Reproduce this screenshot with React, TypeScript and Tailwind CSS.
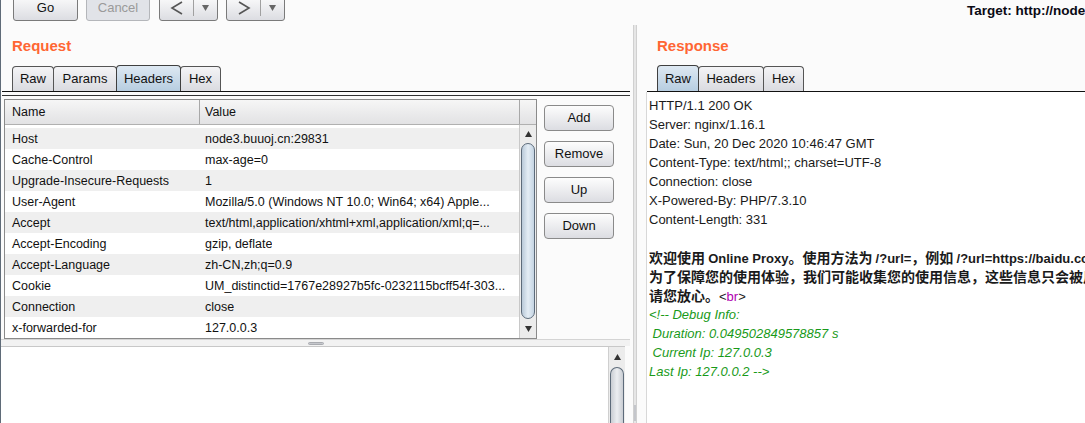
import React from "react";

const btn =
  "rounded-[3px] border border-[#7a7a7a] bg-gradient-to-b from-[#fdfdfd] to-[#dcdde2] flex items-center justify-center text-[13px] text-[#111]";

function VScroll({ thumbTop, thumbBottom }: { thumbTop: number; thumbBottom: number }) {
  return (
    <div className="w-[17px] h-full bg-[#ececec] border-l border-[#c8c8c8] flex flex-col relative">
      <div className="h-[18px] flex items-center justify-center">
        <svg width="7" height="6" viewBox="0 0 7 6"><path d="M3.5 0 L7 6 L0 6 Z" fill="#333" /></svg>
      </div>
      <div
        className="absolute left-[1px] right-[1px] rounded-[8px] border border-[#5d6b7a] bg-gradient-to-r from-[#b9c9d8] via-[#e4edf5] to-[#c5d4e2]"
        style={{ top: thumbTop, bottom: thumbBottom }}
      />
      <div className="mt-auto h-[18px] flex items-center justify-center">
        <svg width="7" height="6" viewBox="0 0 7 6"><path d="M0 0 L7 0 L3.5 6 Z" fill="#333" /></svg>
      </div>
    </div>
  );
}

function Tabs({ items, selected }: { items: { label: string; w: number }[]; selected: number }) {
  return (
    <div className="flex items-end h-[26px]">
      {items.map((t, i) => (
        <div
          key={t.label}
          style={{ width: t.w }}
          className={
            i === selected
              ? "h-[26px] -mr-px border border-b-0 border-[#3f3f3f] rounded-t-[4px] bg-gradient-to-b from-[#dde8f2] to-[#b7cde0] flex items-center justify-center text-[13px] text-[#111] relative z-10"
              : "h-[25px] -mr-px border border-b-0 border-[#555] rounded-t-[4px] bg-gradient-to-b from-[#f4f4f6] to-[#dadbe0] flex items-center justify-center text-[13px] text-[#111]"
          }
        >
          {t.label}
        </div>
      ))}
    </div>
  );
}

const rows: [string, string][] = [
  ["Host", "node3.buuoj.cn:29831"],
  ["Cache-Control", "max-age=0"],
  ["Upgrade-Insecure-Requests", "1"],
  ["User-Agent", "Mozilla/5.0 (Windows NT 10.0; Win64; x64) Apple..."],
  ["Accept", "text/html,application/xhtml+xml,application/xml;q=..."],
  ["Accept-Encoding", "gzip, deflate"],
  ["Accept-Language", "zh-CN,zh;q=0.9"],
  ["Cookie", "UM_distinctid=1767e28927b5fc-0232115bcff54f-303..."],
  ["Connection", "close"],
  ["x-forwarded-for", "127.0.0.3"],
];

const headerLines = [
  "HTTP/1.1 200 OK",
  "Server: nginx/1.16.1",
  "Date: Sun, 20 Dec 2020 10:46:47 GMT",
  "Content-Type: text/html;; charset=UTF-8",
  "Connection: close",
  "X-Powered-By: PHP/7.3.10",
  "Content-Length: 331",
];

const cjk = "font-['Noto_Sans_CJK_SC',sans-serif] text-[14px] leading-[19px] font-semibold";
const line = "h-[19px] leading-[19px] overflow-hidden";

export default function App() {
  return (
    <div className="w-[1085px] h-[423px] overflow-hidden bg-[#fbfbfb] flex flex-col font-['Liberation_Sans',Arial,sans-serif] text-[#111] border-l border-[#5f6b78]">
      {/* top bar */}
      <div className="h-[25px] flex items-start shrink-0">
        <div className="flex mt-[-6px] ml-[12px]">
          <div className={btn + " w-[65px] h-[27px]"}>Go</div>
          <div className="ml-[8px] w-[64px] h-[27px] rounded-[3px] border border-[#b4b6ba] bg-[#e1e3e8] flex items-center justify-center text-[13px] text-[#9a9a9a]">
            Cancel
          </div>
          <div className={btn + " h-[27px] ml-[9px] w-[59px] justify-start"}>
            <span className="w-[33px] flex justify-center">
              <svg width="14" height="14" viewBox="0 0 14 14"><path d="M12 1 L2 7 L12 13" stroke="#555" strokeWidth="1.6" fill="none" /></svg>
            </span>
            <span className="w-px h-[17px] bg-[#a0a0a0]" />
            <span className="flex-1 flex justify-center">
              <svg width="7" height="6" viewBox="0 0 7 6"><path d="M0 0 L7 0 L3.5 6 Z" fill="#666" /></svg>
            </span>
          </div>
          <div className={btn + " h-[27px] ml-[8px] w-[59px] justify-start"}>
            <span className="w-[33px] flex justify-center">
              <svg width="14" height="14" viewBox="0 0 14 14"><path d="M2 1 L12 7 L2 13" stroke="#555" strokeWidth="1.6" fill="none" /></svg>
            </span>
            <span className="w-px h-[17px] bg-[#a0a0a0]" />
            <span className="flex-1 flex justify-center">
              <svg width="7" height="6" viewBox="0 0 7 6"><path d="M0 0 L7 0 L3.5 6 Z" fill="#666" /></svg>
            </span>
          </div>
        </div>
        <div className="ml-[682px] mt-[1px] font-bold text-[13.5px] text-[#0a0a14] whitespace-nowrap">
          Target: http://node3.buuoj.cn:29831
        </div>
      </div>

      {/* main */}
      <div className="flex flex-1 min-h-0">
        {/* left pane */}
        <div className="w-[629px] flex flex-col shrink-0">
          <div className="h-[40px] pl-[11px] pt-[12px] text-[15px] leading-[18px] font-bold text-[#ff6633]">Request</div>
          <div className="pl-[11px]">
            <Tabs
              selected={2}
              items={[
                { label: "Raw", w: 42 },
                { label: "Params", w: 64 },
                { label: "Headers", w: 65 },
                { label: "Hex", w: 41 },
              ]}
            />
          </div>
          <div className="h-px bg-[#111] ml-px" />
          <div className="h-[3px]" />
          <div className="h-px bg-[#333] ml-px" />
          {/* table + buttons */}
          <div className="flex h-[243px] pt-[3px] pl-[3px]">
            <div className="w-[533px] h-[240px] border border-[#8a8a8a] bg-white flex flex-col">
              <div className="h-[25px] shrink-0 flex bg-gradient-to-b from-[#f6f6f6] to-[#e2e2e4] border-b border-[#b0b0b0] text-[12.5px]">
                <div className="w-[195px] border-r border-[#a8a8a8] pl-[7px] flex items-center">Name</div>
                <div className="w-[320px] border-r border-[#a8a8a8] pl-[5px] flex items-center">Value</div>
                <div className="flex-1" />
              </div>
              <div className="flex flex-1 min-h-0 bg-white">
                <div className="flex-1 flex flex-col pt-[3px]">
                  {rows.map(([n, v], i) => (
                    <div
                      key={n}
                      className={
                        "h-[21px] shrink-0 flex items-center pt-[2px] text-[12.5px] text-[#111] " +
                        (i % 2 === 0 ? "bg-[#efefef]" : "bg-white")
                      }
                    >
                      <div className="w-[195px] pl-[7px] whitespace-nowrap overflow-hidden">{n}</div>
                      <div className="pl-[5px] whitespace-nowrap overflow-hidden">{v}</div>
                    </div>
                  ))}
                </div>
                <VScroll thumbTop={18} thumbBottom={19} />
              </div>
            </div>
            <div className="ml-[7px] mt-[6px] flex flex-col gap-[10px]">
              {["Add", "Remove", "Up", "Down"].map((b) => (
                <div key={b} className="w-[70px] h-[26px] shrink-0 rounded-[4px] border border-[#8a8a8a] bg-gradient-to-b from-[#fdfdfd] to-[#dcdde2] flex items-center justify-center text-[13px] text-[#111]">
                  {b}
                </div>
              ))}
            </div>
          </div>
          {/* splitter */}
          <div className="h-[7px] flex items-center justify-center bg-[#f2f2f2] border-t border-[#d4d4d4]">
            <div className="w-[16px] h-[3px] rounded-[2px] bg-[#c5c7cc] border border-[#a9abb0]" />
          </div>
          {/* bottom text area */}
          <div className="flex-1 flex w-[624px] bg-white border-t border-[#c8c8c8]">
            <div className="flex-1" />
            <div className="w-[17px] bg-[#ececec] border-l border-[#cfcfcf] flex flex-col">
              <div className="h-[20px] flex items-center justify-center">
                <svg width="7" height="6" viewBox="0 0 7 6"><path d="M3.5 0 L7 6 L0 6 Z" fill="#333" /></svg>
              </div>
              <div className="flex-1 mx-px rounded-t-[8px] border border-b-0 border-[#5d6b7a] bg-gradient-to-r from-[#c9cdd3] via-[#eceef1] to-[#c9cdd3]" />
            </div>
          </div>
        </div>

        {/* vertical divider */}
        <div className="w-[11px] flex shrink-0">
          <div className="w-[3px]" />
          <div className="w-[4px] bg-[#e6e6e6] border-x border-[#d0d0d0] flex flex-col justify-end">
            <div className="h-[16px] mb-[2px] bg-[#c4c6cb]" />
          </div>
        </div>

        {/* right pane */}
        <div className="flex-1 flex flex-col min-w-0">
          <div className="h-[40px] pl-[16px] pt-[12px] text-[15px] leading-[18px] font-bold text-[#ff6633]">Response</div>
          <div className="pl-[16px]">
            <Tabs
              selected={0}
              items={[
                { label: "Raw", w: 42 },
                { label: "Headers", w: 66 },
                { label: "Hex", w: 41 },
              ]}
            />
          </div>
          <div className="h-px bg-[#111] ml-[6px]" />
          <div className="flex-1 ml-[5px] bg-white border-l border-[#d8d8d8] pt-[4px] pl-[2px] text-[13px] text-[#1a1a1a] whitespace-nowrap overflow-hidden">
            {headerLines.map((l) => (
              <div key={l} className={line}>{l}</div>
            ))}
            <div className="h-[19px]" />
            <div className={line}>
              <span className={cjk}>欢迎使用 </span>
              <b>Online Proxy</b>
              <span className={cjk}>。使用方法为 </span>
              <b>/?url=</b>
              <span className={cjk}>，例如 </span>
              <b>/?url=https://baidu.com</b>
              <span className={cjk}>，将会访问 </span>
            </div>
            <div className={line}>
              <span className={cjk}>为了保障您的使用体验，我们可能收集您的使用信息，这些信息只会被用于优化服务，</span>
            </div>
            <div className={line}>
              <span className={cjk}>请您放心。</span>
              <span>&lt;</span>
              <span className="text-[#b000b0]">br</span>
              <span>&gt;</span>
            </div>
            <div className={line + " italic text-[#199a19]"}>&lt;!-- Debug Info:</div>
            <div className={line + " italic text-[#199a19]"}>&nbsp;Duration: 0.049502849578857 s</div>
            <div className={line + " italic text-[#199a19]"}>&nbsp;Current Ip: 127.0.0.3</div>
            <div className={line + " italic text-[#199a19]"}>Last Ip: 127.0.0.2 --&gt;</div>
          </div>
        </div>
      </div>
    </div>
  );
}
